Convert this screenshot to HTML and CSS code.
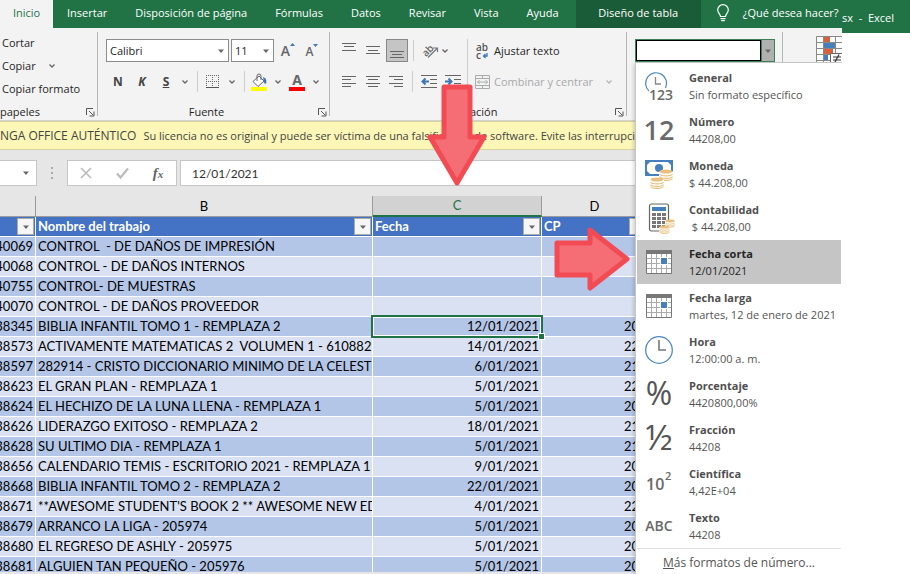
FILE: index.html
```html
<!DOCTYPE html>
<html lang="es">
<head>
<meta charset="utf-8">
<title>Excel</title>
<meta name="viewport" content="width=device-width, initial-scale=1">
<link rel="stylesheet" href="styles.css">
</head>
<body>
<svg class="defs" aria-hidden="true">
  <symbol id="chev" viewBox="0 0 8 8"><path d="M1.500 2.500 4 5l2.500-2.500" fill="none" stroke="currentColor" stroke-width="1.300"/></symbol>
  <symbol id="tri" viewBox="0 0 8 8"><path d="M1 2.500h6L4 6z" fill="currentColor"/></symbol>
  <symbol id="launch" viewBox="0 0 9 9"><path d="M.5 7V.5H7M3 3l4 4M8 3.500V8H3.500" fill="none" stroke="#555"/></symbol>
  <symbol id="coins" viewBox="0 0 14 12"><path d="M0 2.500v7c2 3 12 3 14 0v-7z" fill="#fff"/><ellipse cx="7" cy="2.500" rx="6.500" ry="2" fill="#e9bf7c"/><path d="M.5 5c2 2.600 11 2.600 13 0M.5 7.500c2 2.600 11 2.600 13 0M.5 9.500c2 2.600 11 2.600 13 0" fill="none" stroke="#e9bf7c" stroke-width="1.200"/></symbol>
  <symbol id="calendar" viewBox="0 0 28 28"><path d="M1.500 2.500h25v23h-25z" fill="#fff" stroke="#777"/><path d="M1 2h26v4H1z" fill="#777"/><path d="M6.500 6v19M11.500 6v19M16.500 6v19M21.500 6v19M2 10.500h24M2 15.500h24M2 20.500h24" stroke="#aaa" fill="none"/><path d="M15 9h8v8h-8z" fill="#fff"/><path d="M16 10h6v6h-6z" fill="#4580bd"/></symbol>
</svg>

<div class="window">
  <main class="excel">
    <nav class="tabs" aria-label="Cinta de opciones">
      <a class="tab active" href="#">Inicio</a>
      <a class="tab" href="#">Insertar</a>
      <a class="tab" href="#">Disposición de página</a>
      <a class="tab" href="#">Fórmulas</a>
      <a class="tab" href="#">Datos</a>
      <a class="tab" href="#">Revisar</a>
      <a class="tab" href="#">Vista</a>
      <a class="tab" href="#">Ayuda</a>
      <a class="tab context" href="#">Diseño de tabla</a>
      <a class="tab tell" href="#"><svg width="12" height="18" viewBox="0 0 12 18" fill="none" stroke="#fff" stroke-width="1.200"><path d="M3.500 12.500c0-2.500-2.800-3.500-2.800-6.500a5.300 5.300 0 0 1 10.600 0c0 3-2.800 4-2.800 6.500zM3.500 14.600h5M4.200 16.700h3.600"/></svg><span>¿Qué desea hacer?</span></a>
    </nav>

    <section class="ribbon">
      <div class="group clipboard">
        <div class="tools list">
          <button>Cortar</button>
          <button>Copiar <svg class="chev"><use href="#chev"/></svg></button>
          <button>Copiar formato</button>
        </div>
        <div class="caption"><span>papeles</span><button class="launch" aria-label="Opciones del portapapeles"><svg><use href="#launch"/></svg></button></div>
      </div>

      <div class="group font">
        <div class="tools">
          <div class="line">
            <div class="combo family"><input aria-label="Fuente" value="Calibri"><svg class="chev"><use href="#tri"/></svg></div>
            <div class="combo size"><input aria-label="Tamaño de fuente" value="11"><svg class="chev"><use href="#tri"/></svg></div>
            <button class="step" aria-label="Aumentar tamaño"><b>A</b><svg width="5" height="3" viewBox="0 0 5 3"><path d="M0 3h5L2.500 0z" fill="#3f76b5"/></svg></button>
            <button class="step small" aria-label="Disminuir tamaño"><b>A</b><svg width="5" height="3" viewBox="0 0 5 3"><path d="M0 0h5L2.500 3z" fill="#3f76b5"/></svg></button>
          </div>
          <div class="line second">
            <button class="glyph"><b>N</b></button>
            <button class="glyph"><b><i>K</i></b></button>
            <button class="glyph"><b><u>S</u></b></button>
            <button class="more" aria-label="Más subrayado"><svg class="chev"><use href="#chev"/></svg></button>
            <span class="rule"></span>
            <button class="pic borders" aria-label="Bordes"><svg width="14" height="14" viewBox="0 0 14 14"><path d="M.5 0v12M6.500 0v12M12.500 0v12M0 .5h13M0 6.500h13" stroke="#666" stroke-dasharray="1 1" fill="none"/><path d="M0 12.500h13" stroke="#555"/></svg></button>
            <button class="more" aria-label="Más bordes"><svg class="chev"><use href="#chev"/></svg></button>
            <span class="rule"></span>
            <button class="pic fill" aria-label="Color de relleno"><svg width="16" height="18" viewBox="0 0 16 18"><path d="M2 8.500 8 3l5 5-6 5.500z" fill="#fff" stroke="#666"/><path d="M6 8V3a2 2 0 0 1 4 0v4" fill="none" stroke="#666"/><path d="M12 4c3 1 4 3 3 7l-2-1z" fill="#3f76b5"/><path d="M0 14h16v4H0z" fill="#ff0"/></svg></button>
            <button class="more" aria-label="Más colores de relleno"><svg class="chev"><use href="#chev"/></svg></button>
            <button class="pic ink" aria-label="Color de fuente"><b>A</b></button>
            <button class="more" aria-label="Más colores de fuente"><svg class="chev"><use href="#chev"/></svg></button>
          </div>
        </div>
        <div class="caption"><span>Fuente</span><button class="launch" aria-label="Opciones de fuente"><svg><use href="#launch"/></svg></button></div>
      </div>

      <div class="group align">
        <div class="tools split">
          <div class="half">
            <div class="line">
              <button class="al" aria-label="Alinear arriba"><svg width="14" height="18" viewBox="0 0 14 18"><path d="M0 1.500h14M2 4.500h10M0 8.500h14" stroke="#666"/></svg></button>
              <button class="al" aria-label="Alinear en el medio"><svg width="14" height="18" viewBox="0 0 14 18"><path d="M0 4.500h14M2 8.500h10M0 11.500h14" stroke="#666"/></svg></button>
              <button class="al on" aria-label="Alinear abajo"><svg width="14" height="18" viewBox="0 0 14 18"><path d="M0 9.500h14M2 12.500h10M0 15.500h14" stroke="#666"/></svg></button>
              <span class="rule"></span>
              <button class="pic" aria-label="Orientación"><svg width="17" height="17" viewBox="0 0 17 17"><text x="0" y="12" transform="rotate(-45 6 9)" class="abtext">ab</text><path d="M6 15.500 15 6.500M11 6h4.500v4" fill="none" stroke="#777" stroke-width="1.200"/></svg></button>
              <button class="more near" aria-label="Más orientaciones"><svg class="chev"><use href="#chev"/></svg></button>
            </div>
            <div class="line second">
              <button class="al" aria-label="Alinear a la izquierda"><svg width="14" height="12" viewBox="0 0 14 12"><path d="M0 .5h14M0 3.500h9M0 7.500h14M0 10.500h9" stroke="#666"/></svg></button>
              <button class="al" aria-label="Centrar"><svg width="14" height="12" viewBox="0 0 14 12"><path d="M0 .5h14M2 3.500h10M0 7.500h14M2 10.500h10" stroke="#666"/></svg></button>
              <button class="al" aria-label="Alinear a la derecha"><svg width="14" height="12" viewBox="0 0 14 12"><path d="M0 .5h14M5 3.500h9M0 7.500h14M5 10.500h9" stroke="#666"/></svg></button>
              <span class="rule"></span>
              <button class="pic" aria-label="Disminuir sangría"><svg width="16" height="14" viewBox="0 0 16 14"><path d="M0 .5h16M9 4.500h7M9 8.500h7M0 12.500h16" stroke="#666"/><path d="M8 6.500H2M4.500 3.500l-3 3 3 3" fill="none" stroke="#3f76b5" stroke-width="2"/></svg></button>
              <button class="pic" aria-label="Aumentar sangría"><svg width="16" height="14" viewBox="0 0 16 14"><path d="M0 .5h16M9 4.500h7M9 8.500h7M0 12.500h16" stroke="#666"/><path d="M0 6.500h6M3.500 3.500l3 3-3 3" fill="none" stroke="#3f76b5" stroke-width="2"/></svg></button>
            </div>
          </div>
          <span class="rule tall"></span>
          <div class="half wide">
            <div class="line"><button class="cmd"><svg width="15" height="18" viewBox="0 0 15 18"><text x="1" y="9" class="wraptext">ab</text><text x="1" y="17" class="wraptext">c</text><path d="M12 11v3H8.500M10.500 12l-2 2 2 2" fill="none" stroke="#3f76b5" stroke-width="1.300"/></svg><span>Ajustar texto</span></button></div>
            <div class="line second"><button class="cmd" disabled><svg width="15" height="16" viewBox="0 0 15 16" fill="none" stroke="#aaa"><path d="M.5 1.500h14v13H.5zM0 4.500h15M0 11.500h15M7.500 1v3M7.500 12v3M2.500 8h10M4.500 6l-2 2 2 2M10.500 6l2 2-2 2"/></svg><span>Combinar y centrar</span><svg class="chev"><use href="#chev"/></svg></button></div>
          </div>
        </div>
        <div class="caption"><span>Alineación</span><button class="launch" aria-label="Opciones de alineación"><svg><use href="#launch"/></svg></button></div>
      </div>

      <div class="group number">
        <div class="format">
          <div class="picker"><input aria-label="Formato de número"><button aria-label="Abrir lista de formatos"><svg class="chev"><use href="#tri"/></svg></button></div>
          <div class="menu">
            <ul>
              <li><button><svg width="28" height="30" viewBox="0 0 28 30"><path d="M4 20A10.500 10.500 0 1 1 20.500 17" fill="none" stroke="#4d87c2" stroke-width="1.200"/><path d="M10.500 6v7H16" fill="none" stroke="#888" stroke-width="1.300"/><text x="4" y="29" class="t123">123</text></svg><span><b>General</b>Sin formato específico</span></button></li>
              <li><button><svg width="28" height="28" viewBox="0 0 28 28"><text x="14" y="24" class="t12">12</text></svg><span><b>Número</b>44208,00</span></button></li>
              <li><button><svg width="28" height="28" viewBox="0 0 28 28"><path d="M0 0h28v16H0z" fill="#4580bd"/><path d="M5 2h18l3 3v6l-3 3H5l-3-3V5z" fill="#fff"/><circle cx="14" cy="8" r="4" fill="#4580bd"/><use href="#coins" x="14" y="9" width="14" height="12"/><use href="#coins" x="5" y="17" width="14" height="12"/></svg><span><b>Moneda</b>$ 44.208,00</span></button></li>
              <li><button><svg width="28" height="30" viewBox="0 0 28 30"><rect x="4.500" y="1" width="19" height="27" rx="2" fill="#fff" stroke="#666" stroke-width="1.200"/><path d="M7 4h14v4H7z" fill="#4580bd"/><path d="M7 11.500h14M7 15.500h14M7 19.500h14M7 23.500h14" stroke="#777" stroke-width="3" stroke-dasharray="4 1"/><use href="#coins" x="20" y="16" width="10" height="9"/><use href="#coins" x="14" y="22" width="11" height="9"/></svg><span><b>Contabilidad</b>&nbsp;$ 44.208,00</span></button></li>
              <li><button class="chosen"><svg width="28" height="28"><use href="#calendar"/></svg><span><b>Fecha corta</b>12/01/2021</span></button></li>
              <li><button><svg width="28" height="28"><use href="#calendar"/></svg><span><b>Fecha larga</b>martes, 12 de enero de 2021</span></button></li>
              <li><button><svg width="28" height="28" viewBox="0 0 28 28" fill="none"><circle cx="14" cy="14" r="13.300" stroke="#4d87c2" stroke-width="1.300"/><path d="M14 4v10h7" stroke="#777" stroke-width="1.600"/></svg><span><b>Hora</b>12:00:00 a. m.</span></button></li>
              <li><button><svg width="28" height="28" viewBox="0 0 28 28"><text x="14" y="25" class="tpct">%</text></svg><span><b>Porcentaje</b>4420800,00%</span></button></li>
              <li><button><svg width="28" height="28" viewBox="0 0 28 28"><text x="14" y="26" class="thalf">½</text></svg><span><b>Fracción</b>44208</span></button></li>
              <li><button><svg width="28" height="28" viewBox="0 0 28 28"><text x="1" y="22" class="tsci">10</text><text x="20" y="12" class="tsup">2</text></svg><span><b>Científica</b>4,42E+04</span></button></li>
              <li><button><svg width="28" height="28" viewBox="0 0 28 28"><text x="14" y="19" class="tabc">ABC</text></svg><span><b>Texto</b>44208</span></button></li>
            </ul>
            <button class="all"><u>M</u>ás formatos de número...</button>
          </div>
        </div>
      </div>

      <div class="group styles">
        <svg width="26" height="26" viewBox="0 0 26 26"><path d="M0 0h26v26H0z" fill="#fff"/><path d="M.5 26V.5H26M7.500 0v26M19.500 0v26M0 6.500h26M0 12.500h26M0 18.500h26M0 24.500h26" fill="none" stroke="#888"/><path d="M8 1h6v5H8zM8 13h9v5H8z" fill="#d9603f"/><path d="M8 7h11v5H8zM8 19h4v5H8z" fill="#4580bd"/><path d="M14.500 17.500H27V27H14.500z" fill="#fff" stroke="#666"/><path d="M17 21h8M17 24h8M23 18.500l-4 7.500" stroke="#333" stroke-width="1.200"/></svg>
      </div>
    </section>

    <div class="notice"><b>NGA OFFICE AUTÉNTICO</b><span>Su licencia no es original y puede ser víctima de una falsificación de software. Evite las interrupciones</span></div>

    <div class="formula">
      <div class="namebox"><svg class="chev"><use href="#tri"/></svg></div>
      <svg class="grip" width="2" height="12" viewBox="0 0 2 12"><path d="M0 0h2v2H0zM0 5h2v2H0zM0 10h2v2H0z" fill="#aaa"/></svg>
      <div class="actions">
        <button aria-label="Cancelar"><svg width="12" height="12" viewBox="0 0 12 12"><path d="m1 1 10 10M11 1 1 11" stroke="#bbb" stroke-width="1.600"/></svg></button>
        <button aria-label="Introducir"><svg width="13" height="12" viewBox="0 0 13 12"><path d="m1 6.500 3.500 4L12 1.500" fill="none" stroke="#bbb" stroke-width="2.200"/></svg></button>
        <button class="fx" aria-label="Insertar función"><i>f<small>x</small></i></button>
      </div>
      <input aria-label="Barra de fórmulas" value="12/01/2021">
    </div>

    <div class="sheet">
      <table>
        <colgroup><col class="ca"><col class="cb"><col class="cc"><col class="cd"><col></colgroup>
        <thead>
          <tr class="letters"><th></th><th>B</th><th class="sel">C</th><th>D</th><th></th></tr>
          <tr class="heads">
            <th><div><button aria-label="Filtrar"><svg class="chev"><use href="#tri"/></svg></button></div></th>
            <th><div>Nombre del trabajo<button aria-label="Filtrar nombre"><svg class="chev"><use href="#tri"/></svg></button></div></th>
            <th><div>Fecha<button aria-label="Filtrar fecha"><svg class="chev"><use href="#tri"/></svg></button></div></th>
            <th><div>CP<button aria-label="Filtrar CP"><svg class="chev"><use href="#tri"/></svg></button></div></th>
            <th></th>
          </tr>
        </thead>
        <tbody>
          <tr><td><div>40069</div></td><td>CONTROL  - DE DAÑOS DE IMPRESIÓN</td><td></td><td></td><td></td></tr>
          <tr><td><div>40068</div></td><td>CONTROL - DE DAÑOS INTERNOS</td><td></td><td></td><td></td></tr>
          <tr><td><div>40755</div></td><td>CONTROL- DE MUESTRAS</td><td></td><td></td><td></td></tr>
          <tr><td><div>40070</div></td><td>CONTROL - DE DAÑOS PROVEEDOR</td><td></td><td></td><td></td></tr>
          <tr><td><div>38345</div></td><td>BIBLIA INFANTIL TOMO 1 - REMPLAZA 2</td><td class="cursor">12/01/2021</td><td>20</td><td></td></tr>
          <tr><td><div>38573</div></td><td>ACTIVAMENTE MATEMATICAS 2  VOLUMEN 1 - 61088297</td><td>14/01/2021</td><td>22</td><td></td></tr>
          <tr><td><div>38597</div></td><td>282914 - CRISTO DICCIONARIO MINIMO DE LA CELESTIAL</td><td>6/01/2021</td><td>21</td><td></td></tr>
          <tr><td><div>38623</div></td><td>EL GRAN PLAN - REMPLAZA 1</td><td>5/01/2021</td><td>22</td><td></td></tr>
          <tr><td><div>38624</div></td><td>EL HECHIZO DE LA LUNA LLENA - REMPLAZA 1</td><td>5/01/2021</td><td>20</td><td></td></tr>
          <tr><td><div>38626</div></td><td>LIDERAZGO EXITOSO - REMPLAZA 2</td><td>18/01/2021</td><td>21</td><td></td></tr>
          <tr><td><div>38628</div></td><td>SU ULTIMO DIA - REMPLAZA 1</td><td>5/01/2021</td><td>21</td><td></td></tr>
          <tr><td><div>38656</div></td><td>CALENDARIO TEMIS - ESCRITORIO 2021 - REMPLAZA 1</td><td>9/01/2021</td><td>20</td><td></td></tr>
          <tr><td><div>38668</div></td><td>BIBLIA INFANTIL TOMO 2 - REMPLAZA 2</td><td>22/01/2021</td><td>20</td><td></td></tr>
          <tr><td><div>38671</div></td><td>**AWESOME STUDENT'S BOOK 2 ** AWESOME NEW EDITION</td><td>4/01/2021</td><td>22</td><td></td></tr>
          <tr><td><div>38679</div></td><td>ARRANCO LA LIGA - 205974</td><td>5/01/2021</td><td>20</td><td></td></tr>
          <tr><td><div>38680</div></td><td>EL REGRESO DE ASHLY - 205975</td><td>5/01/2021</td><td>20</td><td></td></tr>
          <tr><td><div>38681</div></td><td>ALGUIEN TAN PEQUEÑO - 205976</td><td>5/01/2021</td><td>20</td><td></td></tr>
        </tbody>
      </table>
    </div>
    <div class="sheetbar"></div>
    <svg class="arrow down" width="64" height="106" viewBox="0 0 64 106"><path d="M18 4h26v50h14L31 100 4 54h14z"/></svg>
    <svg class="arrow right" width="78" height="68" viewBox="0 0 78 68"><path d="M4 18h33V5l37 29-37 29V50H4z"/></svg>
  </main>
  <aside class="behind"><div class="title">sx&nbsp; -&nbsp; Excel</div></aside>
</div>
</body>
</html>
```
FILE: styles.css
```css
* { box-sizing: border-box; }
body { margin: 0; background: #fff; font: 12px/16px "Open Sans", "Noto Sans", sans-serif; color: #262626; }
button, input { font: inherit; color: inherit; background: none; border: 0; padding: 0; margin: 0; border-radius: 0; }
button { display: flex; align-items: center; justify-content: center; }
input { min-width: 0; outline: 0; }
.defs { display: none; }
.chev { width: 8px; height: 8px; flex: none; color: #666; }

.window { display: flex; height: 100vh; overflow: hidden; }
.excel { position: relative; flex: 1; min-width: 0; display: flex; flex-direction: column; }
.behind { width: 68px; flex: none; }
.title { height: 33px; padding-top: 2px; background: #217346; color: #fff; line-height: 32px; font-size: 11px; white-space: nowrap; }

/* tabs */
.tabs { display: flex; height: 28px; flex: none; background: #217346; }
.tab { display: flex; align-items: center; justify-content: center; padding: 0 14px 2px; color: #fff; text-decoration: none; white-space: nowrap; font-size: 11px; }
.tab.active { background: #f3f3f3; color: #217346; width: 53px; }
.tab.context { background: #1b5c38; width: 125px; margin-left: 3px; }
.tab.tell { gap: 14px; padding: 0 0 2px 16px; }

/* ribbon */
.ribbon { display: flex; flex: none; height: 93px; background: #f3f3f3; border-bottom: 1px solid #d2d2d2; font-size: 11px; }
.group { position: relative; display: flex; flex-direction: column; justify-content: space-between; flex: none; }
.group::after { content: ""; position: absolute; right: 0; top: 4px; bottom: 4px; width: 1px; background: #b5b5b5; }
.clipboard { width: 98px; }
.font { width: 232px; }
.align { width: 297px; }
.number { width: 156px; }
.styles { flex: 1; min-width: 0; padding: 8px 0 0 33px; overflow: hidden; }
.styles svg { flex: none; }
.group.styles::after { display: none; }
.tools { padding: 11px 8px 0; }
.list { padding: 3px 0 0 2px; }
.list button { height: 23px; gap: 12px; }
.caption { display: flex; align-items: center; height: 16px; padding-right: 3px; white-space: nowrap; }
.caption span { flex: 1; text-align: center; padding-right: 3px; }
.clipboard .caption span { text-align: left; }
.launch svg { width: 9px; height: 9px; }
.line { display: flex; align-items: center; height: 23px; }
.second { margin-top: 8px; }
.combo { display: flex; flex: none; align-items: center; background: #fff; border: 1px solid #8c8c8c; height: 23px; padding: 0 3px; margin-right: 2px; }
.combo input { flex: 1; width: 10px; }
.family { width: 123px; }
.size { width: 43px; }
.step { flex: none; width: 24px; height: 23px; align-items: flex-start; font-size: 14px; color: #666; padding-top: 4px; }
.step b { font-weight: 600; }
.step + .step { padding-top: 5px; }
.step.small { font-size: 12px; }
.glyph { width: 24px; font-size: 12px; color: #444; }
.more { width: 14px; height: 22px; }
.near { margin-left: -4px; }
.rule { width: 1px; height: 21px; background: #ccc; margin: 0 4px; }
.font .rule { margin: 0 5px; }
.font .line { margin-right: -8px; }
.pic { width: 24px; height: 23px; }
.borders { margin-left: -2px; }
.fill { margin-left: -3px; }
.ink { font-size: 14px; line-height: 14px; color: #666; }
.ink b { width: 16px; border-bottom: 4px solid #f00; }
.split { display: flex; }
.al { width: 24px; height: 23px; }
.al.on { width: 22px; margin: 0 1px; background: #c5c5c5; border: 1px solid #888; }
.half { width: 128px; }
.align .tools { padding-left: 7px; }
.rule.tall { height: 54px; margin: 0 7px 0 2px; }
.cmd { gap: 4px; white-space: nowrap; }
.cmd:disabled { color: #a8a8a8; }
.cmd:disabled .chev { color: #b8b8b8; margin-left: 8px; }
.abtext { font: 600 10px "Open Sans", sans-serif; fill: #666; }
.wraptext { font: 600 10px "Open Sans", sans-serif; fill: #555; }

/* number format list */
.format { position: relative; padding: 11px 7px 0 8px; z-index: 3; }
.picker { display: flex; height: 23px; width: 140px; border: 1px solid #3d7f59; }
.picker input { flex: 1; background: #fff; border: 1px solid #000; }
.picker button { width: 13px; background: #b0b0b0; border-left: 1px solid #3d7f59; }
.menu { position: absolute; left: 8px; top: 34px; width: 207px; padding: 1px 1px 0; background: #fff; border: solid #c6c6c6; border-width: 1px 0 0 1px; color: #555; box-shadow: -2px 2px 3px #0002; }
.menu ul { list-style: none; margin: 0; padding: 0; }
.menu li button { width: 100%; height: 44px; justify-content: flex-start; text-align: left; gap: 16px; padding-left: 8px; line-height: 17px; white-space: nowrap; }
.menu li svg { flex: none; overflow: visible; }
.menu b { display: block; color: #505050; }
.menu .chosen { background: #c5c5c5; color: #262626; }
.menu .chosen b { color: #262626; }
.all { width: 100%; height: 28px; border-top: 1px solid #e1e1e1; font-size: 12px; }
.menu text { font-family: "Open Sans", sans-serif; fill: #6a6a6a; text-anchor: middle; }
.menu .t123 { font-size: 14px; text-anchor: start; font-weight: 600; }
.menu .t12 { font-size: 27px; font-weight: 600; }
.menu .tpct { font-size: 32px; fill: #555; }
.menu .thalf { font-size: 35px; fill: #555; }
.menu .tsci { font-size: 16px; text-anchor: start; font-weight: 600; }
.menu .tsup { font-size: 11px; text-anchor: start; font-weight: 600; }
.menu .tabc { font-size: 14px; font-weight: 600; }

/* message and formula bars */
.notice { flex: none; display: flex; align-items: center; gap: 7px; height: 29px; background: #fcf7b6; border: solid #d9d3a0; border-width: 1px 0; white-space: nowrap; overflow: hidden; color: #444; font-size: 11px; }
.notice b { font-weight: 400; font-size: 12px; }
.formula { flex: none; display: flex; align-items: center; height: 46px; background: #e6e6e6; }
.namebox, .actions, .formula > input { height: 26px; background: #fff; border: 1px solid #c6c6c6; }
.namebox { display: flex; align-items: center; justify-content: flex-end; width: 37px; padding-right: 6px; border-left: 0; }
.grip { margin: 0 14px; }
.actions { display: flex; width: 110px; margin-right: 3px; }
.actions button { flex: 1; }
.fx { font: bold 15px "Liberation Serif", serif; color: #666; }
.fx small { font-size: 11px; }
.formula > input { flex: 1; padding-left: 11px; font-family: Lato, sans-serif; color: #333; }

/* worksheet */
.sheet { flex: 1; min-height: 0; overflow: hidden; background: #fff; }
.sheetbar { flex: none; height: 2px; background: #e6e6e6; }
table { width: 100%; table-layout: fixed; border-collapse: separate; border-spacing: 0; font: 13px/19px Lato, sans-serif; color: #000; }
.ca { width: 36px; }
.cb { width: 337px; }
.cc { width: 169px; }
.cd { width: 106px; }
th, td { padding: 0 2px; height: 20px; overflow: hidden; white-space: pre; border: solid #fff; border-width: 0 1px 1px 0; }
.letters th { height: 21px; background: #e6e6e6; font-weight: 400; border-color: #9b9b9b; }
.letters .sel { background: #d2d2d2; color: #217346; border-bottom: 2px solid #217346; }
.heads th { background: #4472c4; color: #fff; text-align: left; }
.heads div { display: flex; justify-content: space-between; align-items: center; height: 19px; }
.heads div button:only-child { margin-left: auto; }
.heads button { width: 17px; height: 17px; margin-right: -1px; background: #f6f6f6; border: 1px solid #aaa; }
tbody tr:nth-child(odd) { background: #b4c6e7; }
tbody tr:nth-child(even) { background: #d9e1f2; }
td:nth-child(3), td:nth-child(4) { text-align: right; }
td:nth-child(4) { padding-right: 8px; }
td:first-child div { display: flex; justify-content: flex-end; }
.cursor { position: relative; overflow: visible; }
.cursor::before { content: ""; position: absolute; inset: -2px; border: 2px solid #217346; box-shadow: inset 0 0 0 1px #fff; }
.cursor::after { content: ""; position: absolute; right: -3px; bottom: -3px; width: 5px; height: 5px; background: #217346; outline: 1px solid #fff; }

/* callout arrows */
.arrow { position: absolute; z-index: 4; pointer-events: none; }
.arrow path { fill: #f56e75; stroke: #f24b54; stroke-width: 5; stroke-linejoin: round; }
.arrow.down { left: 426px; top: 83px; }
.arrow.right { left: 553px; top: 225px; }
```
